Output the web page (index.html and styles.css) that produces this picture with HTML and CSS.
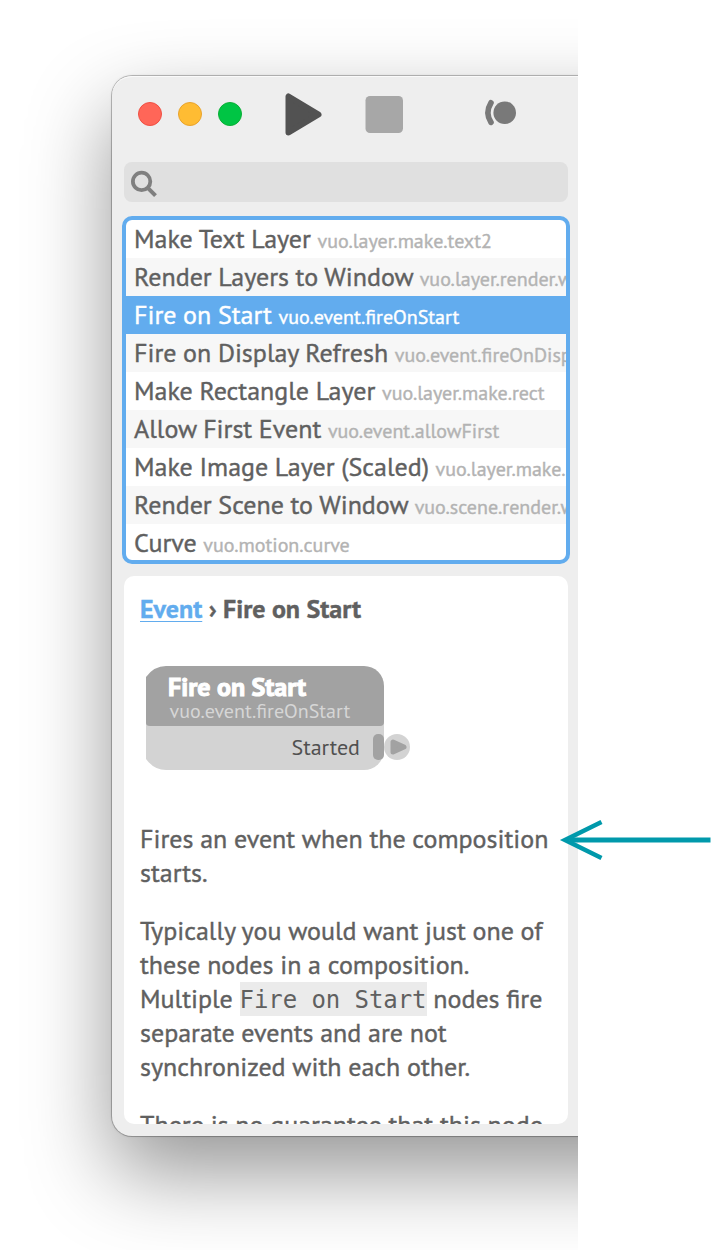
FILE: index.html
```html
<!DOCTYPE html>
<html lang="en">
<head>
<meta charset="utf-8">
<title>Node Library</title>
<link rel="stylesheet" href="styles.css">
</head>
<body>
<div class="stage">
  <div class="window">
    <header class="titlebar">
      <div class="lights">
        <span class="light light-close"></span>
        <span class="light light-min"></span>
        <span class="light light-zoom"></span>
      </div>
      <svg class="tools" width="240" height="48" viewBox="280 90 240 48">
        <path d="M288.5 96.500v36l30-18z" fill="#525252" stroke="#525252" stroke-width="6" stroke-linejoin="round"/>
        <rect x="365.500" y="96" width="37.500" height="37" rx="4.500" fill="#a7a7a7"/>
        <path d="M491 102.800Q484.800 113 491 122.400" fill="none" stroke="#797979" stroke-width="5.600" stroke-linecap="round"/>
        <circle cx="504.700" cy="112.700" r="12.600" fill="#eee"/>
        <circle cx="504.700" cy="112.700" r="11.300" fill="#797979"/>
      </svg>
    </header>
    <div class="search">
      <svg width="30" height="30" viewBox="0 0 30 30">
        <circle cx="11.600" cy="13.400" r="8.700" fill="none" stroke="#7f7f7f" stroke-width="3.800"/>
        <path d="M17 19.200l8.500 8.500" stroke="#7f7f7f" stroke-width="4"/>
      </svg>
    </div>
    <ul class="list">
      <li class="row">Make Text Layer <span class="id">vuo.layer.make.text2</span></li>
      <li class="row">Render Layers to Window <span class="id">vuo.layer.render.window</span></li>
      <li class="row selected">Fire on Start <span class="id">vuo.event.fireOnStart</span></li>
      <li class="row">Fire on Display Refresh <span class="id">vuo.event.fireOnDisplayRefresh</span></li>
      <li class="row">Make Rectangle Layer <span class="id">vuo.layer.make.rect</span></li>
      <li class="row">Allow First Event <span class="id">vuo.event.allowFirst</span></li>
      <li class="row">Make Image Layer (Scaled) <span class="id">vuo.layer.make.scaled</span></li>
      <li class="row">Render Scene to Window <span class="id">vuo.scene.render.window</span></li>
      <li class="row">Curve <span class="id">vuo.motion.curve</span></li>
    </ul>
    <section class="doc">
      <h1 class="crumbs"><a class="crumb-link">Event</a> › Fire on Start</h1>
      <svg class="node" width="266" height="104" viewBox="146 666 266 104">
        <path d="M146 716H384V750A20 20 0 0 1 364 770H166Q154 770 146 759z" fill="#d3d3d3"/>
        <path d="M146 677Q154 666 166 666H364A20 20 0 0 1 384 686V722Q384 726 380 726H150Q146 726 146 723z" fill="#a2a2a2"/>
        <rect x="373" y="734" width="11" height="26" rx="5" fill="#a2a2a2"/>
        <circle cx="397" cy="747" r="13" fill="#d3d3d3"/>
        <path d="M393 742v10l11-5z" fill="#a2a2a2" stroke="#a2a2a2" stroke-width="5" stroke-linejoin="round"/>
        <text class="node-title" x="168" y="695.800">Fire on Start</text>
        <text class="node-id" x="169.500" y="717.800">vuo.event.fireOnStart</text>
        <text class="node-port" x="291.500" y="755">Started</text>
      </svg>
      <p>Fires an event when the composition starts.</p>
      <p>Typically you would want just one of these nodes in a composition. Multiple <code>Fire on Start</code> nodes fire separate events and are not synchronized with each other.</p>
      <p>There is no guarantee that this node</p>
    </section>
  </div>
</div>
<svg class="callout" width="154" height="44" viewBox="558 818 154 44">
  <path d="M570 840H710.500" stroke="#0099ab" stroke-width="5"/>
  <path d="M601.500 822L565 840L601.500 858" fill="none" stroke="#0099ab" stroke-width="4.500" stroke-miterlimit="10"/>
</svg>
</body>
</html>
```
FILE: styles.css
```css
* { box-sizing: border-box; }
body { margin: 0; background: #fff; font-family: "PT Sans", "Noto Sans", sans-serif; color: #606060; -webkit-text-stroke: .4px; }
.stage { width: 578px; height: 1250px; padding: 76px 0 0 112px; overflow: hidden; }
.window {
  width: 640px; height: 1060px; padding: 0 0 12px 12px;
  display: flex; flex-direction: column;
  background: #eee; border-radius: 20px;
  box-shadow: inset 0 1px 0 #fafafa, 0 0 0 1px rgba(0,0,0,.22), 0 0 3px rgba(0,0,0,.15), 0 36px 84px rgba(0,0,0,.42);
}
.titlebar { height: 86px; padding: 14px 0 0 14px; display: flex; gap: 38px; }
.lights { display: flex; gap: 16px; padding-top: 12px; }
.light { width: 24px; height: 24px; border-radius: 50%; border: 1px solid; }
.light-close { background: #ff6658; border-color: #f04f43; }
.light-min { background: #ffbc33; border-color: #e9a32c; }
.light-zoom { background: #00c544; border-color: #0aaf35; }
.search { width: 444px; height: 40px; padding: 6px 6px; background: #e0e0e0; border-radius: 8px; }
.list {
  width: 448px; height: 348px; margin: 14px 0 0 -2px; padding: 0; flex: none;
  list-style: none; overflow: hidden; background: #fff;
  border: 4px solid #62acee; border-radius: 10px;
}
.row { height: 38px; line-height: 38px; padding-left: 8px; font-size: 26px; word-spacing: -.3px; white-space: nowrap; }
.row:nth-child(even) { background: #f7f7f7; }
.id { font-size: 20px; color: #b3b3b3; }
.selected, .selected .id { color: #fff; }
.row.selected { background: #62acee; }
.doc {
  width: 444px; height: 548px; margin-top: 12px; padding: 16px 16px 0; flex: none;
  overflow: hidden; background: #fff; border-radius: 10px;
  font-size: 26px; line-height: 34px; word-spacing: -.2px;
}
.crumbs { margin: 0; font-size: 26px; line-height: 34px; }
.crumb-link { color: #62acee; text-decoration: underline; text-decoration-thickness: 1px; text-underline-offset: 3px; }
.node { display: block; margin: 40px 0 52px 6px; }
.node-title { font-size: 26px; font-weight: 700; fill: #fff; stroke: #fff; }
.node-id { font-size: 20px; fill: #d6d6d6; }
.node-port { font-size: 22px; fill: #505050; }
.doc p { margin: 0 0 24px; }
code { font-family: "DejaVu Sans Mono", monospace; font-size: 24px; line-height: 1; word-spacing: 0; letter-spacing: -.07px; background: #ebebeb; padding: 4px 0 2px; -webkit-text-stroke: 0; }
.callout { position: absolute; left: 558px; top: 818px; }
```
